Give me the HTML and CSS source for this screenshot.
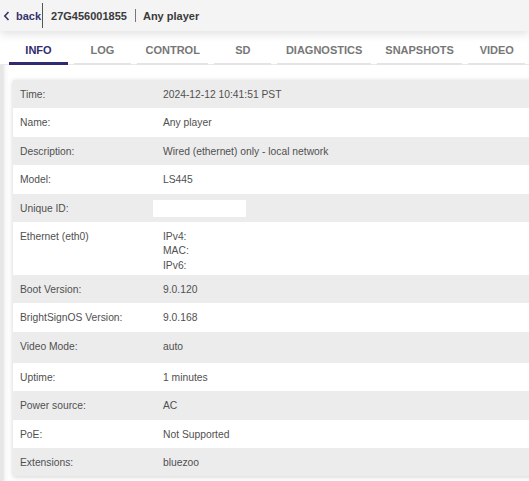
FILE: index.html
```html
<!DOCTYPE html>
<html lang="en">
<head>
    <meta charset="UTF-8">
    <meta name="viewport" content="width=device-width, initial-scale=1.0">
    <title>Player Info</title>
    <link rel="stylesheet" href="styles.css">
</head>
<body>
    <div class="topbar">
        <a class="back" href="#">
            <svg class="back-icon" width="7" height="10" viewBox="0 0 7 10"><path d="M5.5 1 L1.8 5 L5.5 9" fill="none" stroke="#35346e" stroke-width="1.6"/></svg>
            back
        </a>
        <span class="serial">27G456001855</span>
        <span class="sep"></span>
        <span class="player-name">Any player</span>
    </div>
    <div class="tabs">
        <div class="tab active">INFO</div>
        <div class="tab">LOG</div>
        <div class="tab">CONTROL</div>
        <div class="tab">SD</div>
        <div class="tab">DIAGNOSTICS</div>
        <div class="tab">SNAPSHOTS</div>
        <div class="tab">VIDEO</div>
    </div>
    <div class="content">
        <div class="card">
            <div class="row grey"><div class="label">Time:</div><div class="value">2024-12-12 10:41:51 PST</div></div>
            <div class="row"><div class="label">Name:</div><div class="value">Any player</div></div>
            <div class="row grey"><div class="label">Description:</div><div class="value">Wired (ethernet) only - local network</div></div>
            <div class="row"><div class="label">Model:</div><div class="value">LS445</div></div>
            <div class="row grey"><div class="label">Unique ID:</div><div class="value"><span class="uid"></span></div></div>
            <div class="row eth"><div class="label">Ethernet (eth0)</div><div class="value">IPv4:<br>MAC:<br>IPv6:</div></div>
            <div class="row grey"><div class="label">Boot Version:</div><div class="value">9.0.120</div></div>
            <div class="row"><div class="label">BrightSignOS Version:</div><div class="value">9.0.168</div></div>
            <div class="row grey video"><div class="label">Video Mode:</div><div class="value">auto</div></div>
            <div class="row"><div class="label">Uptime:</div><div class="value">1 minutes</div></div>
            <div class="row grey"><div class="label">Power source:</div><div class="value">AC</div></div>
            <div class="row"><div class="label">PoE:</div><div class="value">Not Supported</div></div>
            <div class="row grey"><div class="label">Extensions:</div><div class="value">bluezoo</div></div>
        </div>
    </div>
</body>
</html>
```

FILE: styles.css
```css
*{
    margin: 0;
    padding: 0;
    box-sizing: border-box;
    font-family: 'Liberation Sans', Arial, sans-serif;
}
body{
    background-color: white;
    overflow: hidden;
    width: 529px;
    height: 481px;
}
.topbar{
    height: 31px;
    background-color: #f4f4f4;
    display: flex;
    align-items: center;
    font-size: 11px;
    font-weight: 700;
    color: #3a3a3a;
    box-shadow: 0 3px 10px rgba(0, 0, 0, 0.12);
    position: relative;
}
.back{
    display: flex;
    align-items: center;
    height: 25px;
    padding: 0 1px 0 3px;
    color: #35346e;
    text-decoration: none;
    border-right: 1px solid #555;
}
.back-icon{
    margin-right: 6px;
}
.serial{
    margin-left: 8px;
}
.sep{
    width: 1px;
    height: 13px;
    background-color: #777;
    margin: 0 7px 0 8px;
}
.tabs{
    display: flex;
    gap: 6px;
    padding-left: 9px;
    height: 34px;
    border-bottom: 1px solid #e6e9ef;
}
.tab{
    min-width: 57px;
    padding: 12px 8.5px 0;
    height: 34px;
    line-height: 14px;
    text-align: center;
    font-size: 11px;
    font-weight: 700;
    color: #777;
    border-bottom: 2px solid #e4e4e4;
    flex-shrink: 0;
}
.tab.active{
    color: #2e2c6e;
    min-width: 59px;
    border-bottom: 3px solid #2e2c6e;
}
.content{
    height: 416px;
    padding: 15px 0 0 13px;
    background: linear-gradient(90deg, #e6e6e6 0, #e6e6e6 3px, #f7f7f7 5px, white 9px);
}
.card{
    width: 530px;
    box-shadow: 0 1px 5px rgba(0, 0, 0, 0.18);
    background-color: white;
}
.row{
    display: flex;
    height: 28.4px;
    align-items: flex-start;
    padding-top: 8px;
    font-size: 10.3px;
    line-height: 14.5px;
    color: #505050;
}
.row.grey{
    background-color: #ececec;
}
.row.eth{
    height: 53px;
}
.row.video{
    height: 31px;
}
.label{
    width: 150px;
    padding-left: 7px;
}
.value{
    flex: 1;
}
.uid{
    display: block;
    width: 93px;
    height: 17px;
    background-color: white;
    margin: -2px 0 0 -10px;
}
```
